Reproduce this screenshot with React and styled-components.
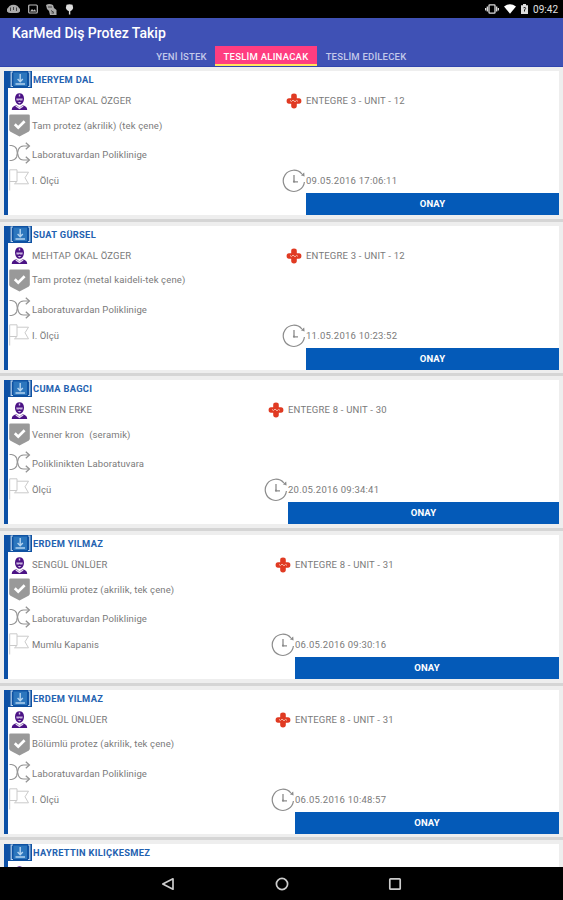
import React from 'react';
import styled, { createGlobalStyle } from 'styled-components';

const orders = [
  {
    patient: 'MERYEM DAL',
    doctor: 'MEHTAP OKAL ÖZGER',
    unit: 'ENTEGRE 3 - UNIT - 12',
    job: 'Tam protez (akrilik) (tek çene)',
    route: 'Laboratuvardan Poliklinige',
    stage: 'I. Ölçü',
    date: '09.05.2016 17:06:11',
    side: 253
  },
  {
    patient: 'SUAT GÜRSEL',
    doctor: 'MEHTAP OKAL ÖZGER',
    unit: 'ENTEGRE 3 - UNIT - 12',
    job: 'Tam protez (metal kaideli-tek çene)',
    route: 'Laboratuvardan Poliklinige',
    stage: 'I. Ölçü',
    date: '11.05.2016 10:23:52',
    side: 253
  },
  {
    patient: 'CUMA BAGCI',
    doctor: 'NESRIN ERKE',
    unit: 'ENTEGRE 8 - UNIT - 30',
    job: 'Venner kron  (seramik)',
    route: 'Poliklinikten Laboratuvara',
    stage: 'Ölçü',
    date: '20.05.2016 09:34:41',
    side: 271
  },
  {
    patient: 'ERDEM YILMAZ',
    doctor: 'SENGÜL ÜNLÜER',
    unit: 'ENTEGRE 8 - UNIT - 31',
    job: 'Bölümlü protez (akrilik, tek çene)',
    route: 'Laboratuvardan Poliklinige',
    stage: 'Mumlu Kapanis',
    date: '06.05.2016 09:30:16',
    side: 264
  },
  {
    patient: 'ERDEM YILMAZ',
    doctor: 'SENGÜL ÜNLÜER',
    unit: 'ENTEGRE 8 - UNIT - 31',
    job: 'Bölümlü protez (akrilik, tek çene)',
    route: 'Laboratuvardan Poliklinige',
    stage: 'I. Ölçü',
    date: '06.05.2016 10:48:57',
    side: 264
  }
];

const InboxIcon = () => (
  <svg width="24" height="17" viewBox="0 0 24 17">
    <rect width="24" height="17" fill="#0f52a2" />
    <path d="M5 1H3.2V15.5H5M20 1H21.8V15.5H20" fill="none" stroke="#b9d3ee" strokeWidth="1.2" />
    <rect x="5.5" y="1.5" width="13.5" height="13.5" fill="#2c76bd" />
    <path d="M12.2 3V10M9.6 8L12.2 10.8L14.8 8M7.5 13H17" fill="none" stroke="#b4d3ef" strokeWidth="1.4" />
  </svg>
);

const DoctorIcon = () => (
  <svg width="17" height="17" viewBox="0 0 17 17">
    <path d="M4 5.5C4 2 6 .3 8.5 .3S13 2 13 5.5C13 9 11 11.8 8.5 11.8S4 9 4 5.5Z" fill="#4b1285" />
    <path d="M5.2 5.5H11.8L11.4 7.6H9.2L8.5 7L7.8 7.6H5.6Z" fill="#c8b4dc" />
    <path d="M7.8 1.6H9.2V3.6H7.8ZM6.6 9H10.4L8.5 10.6Z" fill="#d6c6e6" />
    <path d="M.8 17C.8 14 3 12.8 5.6 12.2L8.5 14.4L11.4 12.2C14 12.8 16.2 14 16.2 17Z" fill="#4b1285" />
    <path d="M4.8 13L8.5 15.4L12.2 13" fill="none" stroke="#e6dcf0" strokeWidth="1.3" />
  </svg>
);

const ShieldIcon = () => (
  <svg width="21" height="23" viewBox="0 0 21 23">
    <path d="M1.5 .5H19.5Q20.8 .5 20.8 1.8V15.5Q20.8 17 19.5 17.8L10.5 22.5L1.5 17.8Q.2 17 .2 15.5V1.8Q.2 .5 1.5 .5Z" fill="#999" />
    <path d="M5.8 10.3L9.2 13.6L15.6 7.3" fill="none" stroke="#fff" strokeWidth="2.7" />
  </svg>
);

const ShuffleIcon = () => (
  <svg width="22" height="22" viewBox="0 0 22 22" fill="none" stroke="#949494" strokeWidth="1.1">
    <path d="M.5 3.5H2.5Q6.2 4 7.6 7Q9 11 7.6 15Q6.2 18 2.5 18.5H.5" />
    <path d="M20 4H14.5Q11 4.2 9.5 7.2Q7.6 11 9.5 14.8Q11 18 14.5 18H20" />
    <path d="M16.8 .8L20.4 4L16.8 7.2M16.8 14.8L20.4 18L16.8 21.2" strokeWidth="1.3" />
  </svg>
);

const FlagIcon = () => (
  <svg width="21" height="22" viewBox="0 0 21 22" fill="none" stroke="#cacaca" strokeWidth="1">
    <path d="M.7 21.5V.8H8V12.5H.7M8 3.2H19.5L16 8.8L19.5 14.8H5.5L8 12.5" />
  </svg>
);

const CrossIcon = () => (
  <svg width="16" height="16" viewBox="0 0 16 16">
    <path d="M5.2 5.2V3Q5.2 .6 8 .6T10.8 3V5.2H13Q15.4 5.2 15.4 8T13 10.8H10.8V13Q10.8 15.4 8 15.4T5.2 13V10.8H3Q.6 10.8 .6 8T3 5.2Z" fill="#e03a22" />
    <path d="M4 7.4L5.5 8.6L7 7L9 8.8L10.6 7.4L12 8.4" fill="none" stroke="#f7b8a6" strokeWidth="1" />
  </svg>
);

const ClockIcon = () => (
  <svg width="24" height="24" viewBox="0 0 24 24" fill="none" stroke="#8c8c8c">
    <path d="M19.8 4.8A10.6 10.6 0 1 0 22.4 13" strokeWidth="1.2" />
    <path d="M18.8 6.3L22.2 3.4L22.6 7.4Z" fill="#8c8c8c" stroke="none" />
    <path d="M12 6V12.8H16" strokeWidth="1.3" />
    <circle cx="12" cy="12.6" r="1.1" fill="#8c8c8c" stroke="none" />
  </svg>
);

const Order = ({ order }) => (
  <Item>
    <Card>
      <PatientRow>
        <InboxIcon />
        <Patient>{order.patient}</Patient>
      </PatientRow>
      <Row height={26}>
        <IconBox><DoctorIcon /></IconBox>
        <Label>{order.doctor}</Label>
        <Side width={order.side}>
          <SideIcon width={16} shift={4}><CrossIcon /></SideIcon>
          <Label>{order.unit}</Label>
        </Side>
      </Row>
      <Row height={23}>
        <IconBox><ShieldIcon /></IconBox>
        <Label spacing={0.14}>{order.job}</Label>
      </Row>
      <Row height={36}>
        <IconBox lift={2}><ShuffleIcon /></IconBox>
        <Label spacing={0.12}>{order.route}</Label>
      </Row>
      <Row height={16}>
        <IconBox lift={1}><FlagIcon /></IconBox>
        <Label spacing={0.08}>{order.stage}</Label>
        <Side width={order.side}>
          <SideIcon width={24} shift={0}><ClockIcon /></SideIcon>
          <Label spacing={0.24}>{order.date}</Label>
        </Side>
      </Row>
      <Approve width={order.side}>ONAY</Approve>
    </Card>
    <Divider />
  </Item>
);

const App = () => (
  <Screen lang="tr">
    <GlobalStyle />
    <StatusBar>
      <StatusGroup>
        <svg width="13" height="10" viewBox="0 0 13 10">
          <path d="M2.5 2Q6.5-.5 10.5 2L13 5V7.5Q11.5 9 9.5 9H3.5Q1.5 9 0 7.5V5Z" fill="#aaa" />
          <path d="M3.5 3.5V7M6.5 3V6M9.5 3.5V7" stroke="#444" />
        </svg>
        <svg width="10" height="10" viewBox="0 0 10 10">
          <rect x=".7" y="1" width="8.6" height="8" rx="1" fill="none" stroke="#bbb" strokeWidth="1.2" />
          <path d="M2 7.5L4 5L5.5 6.5L6.8 5.2L8.2 7.5Z" fill="#bbb" />
        </svg>
        <svg width="11" height="11" viewBox="0 0 11 11">
          <path d="M0 1Q3-1 7 1L8 4L10.5 6V11H4L3 7L1 5Z" fill="#aaa" />
          <path d="M2 3H6M5 6.5L8 8.5M5.5 9H8" stroke="#444" />
        </svg>
        <svg width="9" height="11" viewBox="0 0 9 11">
          <path d="M1.5 .8Q4.5-.3 7.5 .8L8.2 4Q7.5 6.5 5.3 7.2V10.5H3.9V7.2Q1.5 6.5 .8 4Z" fill="#ddd" />
        </svg>
      </StatusGroup>
      <StatusGroup tight>
        <svg width="14" height="10" viewBox="0 0 14 10" fill="none" stroke="#ddd" strokeWidth="1.3">
          <rect x="4" y=".8" width="6" height="8.4" rx=".8" />
          <path d="M2.3 2.5V7.5M11.7 2.5V7.5M.6 4V6.5M13.4 4V6.5" />
        </svg>
        <svg width="12" height="10" viewBox="0 0 12 10">
          <path d="M0 2.5Q6-1.8 12 2.5L6 9.8Z" fill="#fff" />
        </svg>
        <svg width="7" height="10" viewBox="0 0 7 10">
          <path d="M0 1.2H2V0H5V1.2H7V10H0Z" fill="#ddd" />
          <path d="M2.5 3.8Q4.8 2.7 4.6 4.5L3.5 6V7.5" fill="none" stroke="#222" />
        </svg>
        <Time>09:42</Time>
      </StatusGroup>
    </StatusBar>
    <Header>
      <Title>KarMed Diş Protez Takip</Title>
      <Tabs>
        <Tab width={67}>YENİ İSTEK</Tab>
        <Tab width={102} active>TESLİM ALINACAK</Tab>
        <Tab width={98}>TESLİM EDİLECEK</Tab>
      </Tabs>
    </Header>
    <List>
      {orders.map((order, i) => <Order key={i} order={order} />)}
      <Card>
        <PatientRow>
          <InboxIcon />
          <Patient>HAYRETTIN KILIÇKESMEZ</Patient>
        </PatientRow>
        <Row height={26}>
          <IconBox><DoctorIcon /></IconBox>
        </Row>
      </Card>
    </List>
    <NavBar>
      <svg width="14" height="14" viewBox="0 0 14 14">
        <path d="M12 1.8V12.2L1.8 7Z" fill="none" stroke="#ccc" strokeWidth="1.7" strokeLinejoin="round" />
      </svg>
      <svg width="14" height="14" viewBox="0 0 14 14">
        <circle cx="7" cy="7" r="5.6" fill="none" stroke="#ccc" strokeWidth="1.7" />
      </svg>
      <svg width="14" height="14" viewBox="0 0 14 14">
        <rect x="1.8" y="1.8" width="10.4" height="10.4" rx=".8" fill="none" stroke="#ccc" strokeWidth="1.7" />
      </svg>
    </NavBar>
  </Screen>
);

export default App;

const GlobalStyle = createGlobalStyle`
  body {
    margin: 0;
    background: #000;
  }
  * {
    box-sizing: border-box;
  }
  svg {
    display: block;
    flex: none;
  }
`;

const Screen = styled.div`
  display: flex;
  flex-direction: column;
  width: 563px;
  height: 900px;
  overflow: hidden;
  font-family: Roboto, sans-serif;
`;

const StatusBar = styled.div`
  display: flex;
  align-items: center;
  justify-content: space-between;
  flex: none;
  height: 18px;
  padding: 0 5px 0 7px;
  background: #000;
`;

const StatusGroup = styled.div`
  display: flex;
  align-items: center;
  gap: ${props => (props.tight ? '5px' : '8px')};
`;

const Time = styled.span`
  color: #e0e0e0;
  font-size: 10px;
  line-height: 18px;
  padding-top: 1px;
`;

const Header = styled.div`
  display: flex;
  flex-direction: column;
  flex: none;
  height: 49px;
  background: #3f51b5;
  border-bottom: 1px solid #3045ae;
`;

const Title = styled.div`
  height: 28px;
  padding: 0 12px;
  color: #fff;
  font-size: 14px;
  font-weight: 500;
  line-height: 30px;
`;

const Tabs = styled.div`
  display: flex;
  height: 20px;
  padding-left: 148px;
`;

const Tab = styled.div`
  width: ${props => props.width}px;
  height: 20px;
  background: ${props => (props.active ? '#ff3d80' : 'transparent')};
  border-bottom: 2px solid ${props => (props.active ? '#ffe45c' : 'transparent')};
  color: ${props => (props.active ? '#fff' : '#c3c9ea')};
  font-size: 9.5px;
  font-weight: 500;
  letter-spacing: ${props => (props.active ? 0.25 : 0.2)}px;
  line-height: 22px;
  text-align: center;
  white-space: nowrap;
`;

const List = styled.div`
  flex: 1;
  min-height: 0;
  overflow: hidden;
  padding-top: 4px;
  background: #eee;
`;

const Item = styled.div`
  height: 154.7px;
`;

const Card = styled.div`
  height: 144px;
  margin: 0 4px;
  border-left: 4px solid #0c50a6;
  background: #fff;
`;

const Divider = styled.div`
  height: 3px;
  margin-top: 3.5px;
  background: #d5d5d5;
`;

const PatientRow = styled.div`
  display: flex;
  align-items: center;
  height: 17px;
`;

const Patient = styled.div`
  padding-left: 1px;
  color: #2361b0;
  font-size: 9.3px;
  font-weight: 700;
  letter-spacing: 0.3px;
  line-height: 11px;
`;

const Row = styled.div`
  display: flex;
  align-items: center;
  height: ${props => props.height}px;
`;

const IconBox = styled.div`
  display: flex;
  justify-content: center;
  width: 23px;
  margin-right: 1px;
  padding-bottom: ${props => (props.lift || 0) * 2}px;
`;

const Label = styled.div`
  color: #7a7a7a;
  font-size: 9.5px;
  letter-spacing: ${props => props.spacing || 0.19}px;
  line-height: 12px;
  white-space: pre;
`;

const Side = styled.div`
  display: flex;
  align-items: center;
  width: ${props => props.width}px;
  margin-left: auto;
`;

const SideIcon = styled.div`
  width: ${props => props.width}px;
  margin-left: -${props => props.width + props.shift}px;
  margin-right: ${props => props.shift}px;
`;

const Approve = styled.div`
  width: ${props => props.width}px;
  height: 22px;
  margin-top: 4px;
  margin-left: auto;
  background: #045ab8;
  color: #fff;
  font-size: 9.5px;
  font-weight: 700;
  letter-spacing: 0.15px;
  line-height: 22px;
  text-align: center;
`;

const NavBar = styled.div`
  display: flex;
  align-items: center;
  justify-content: center;
  flex: none;
  gap: 99.5px;
  height: 33px;
  background: #000;
`;
